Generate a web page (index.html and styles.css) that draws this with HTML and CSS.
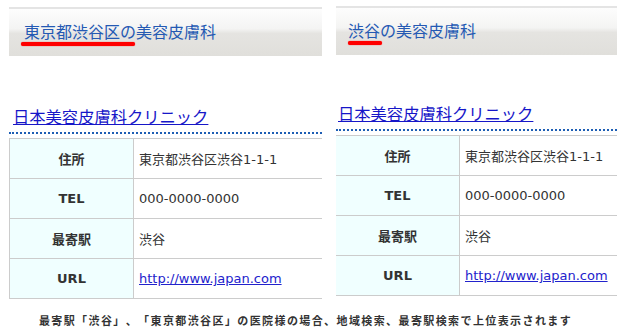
FILE: index.html
```html
<!DOCTYPE html>
<html lang="ja">
<head>
  <meta charset="UTF-8" />
  <title>美容皮膚科クリニック</title>
  <link rel="stylesheet" href="styles.css">
</head>
<body>
  <div class="page">
    <div class="cols">

      <!-- 区での表示例 -->
      <div class="col">
        <div class="area-head">
          <h3><span class="mark mark-long">東京都渋谷区</span>の美容皮膚科</h3>
        </div>
        <h2 class="clinic"><a href="#">日本美容皮膚科クリニック</a></h2>
        <table class="spec">
          <tr><th>住所</th><td>東京都渋谷区渋谷1-1-1</td></tr>
          <tr><th>TEL</th><td>000-0000-0000</td></tr>
          <tr><th>最寄駅</th><td>渋谷</td></tr>
          <tr><th>URL</th><td><a href="#">http://www.japan.com</a></td></tr>
        </table>
      </div>

      <!-- 駅での表示例 -->
      <div class="col col-alt">
        <div class="area-head">
          <h3><span class="mark">渋谷</span>の美容皮膚科</h3>
        </div>
        <h2 class="clinic"><a href="#">日本美容皮膚科クリニック</a></h2>
        <table class="spec spec-open">
          <tr><th>住所</th><td>東京都渋谷区渋谷1-1-1</td></tr>
          <tr><th>TEL</th><td>000-0000-0000</td></tr>
          <tr><th>最寄駅</th><td>渋谷</td></tr>
          <tr><th>URL</th><td><a href="#">http://www.japan.com</a></td></tr>
        </table>
      </div>

    </div>

    <p class="note">最寄駅「渋谷」、「東京都渋谷区」の医院様の場合、地域検索、最寄駅検索で上位表示されます</p>
  </div>
</body>
</html>
```

FILE: styles.css
```css
body, html {
  margin: 0;
  padding: 0;
  background: #fff;
  font-family: "DejaVu Sans", "Noto Sans CJK JP", sans-serif;
  color: #333;
  text-spacing-trim: space-all;
}

.page {
  width: 617px;
  overflow: hidden;
  padding-top: 7px;
}

.cols {
  display: flex;
  gap: 14px;
  padding-left: 9px;
}

.col {
  flex: 0 0 313px;
}

.col-alt {
  margin-top: -1px;
}

/* 見出しバー */
.area-head {
  border-top: 2px solid #e4e4e4;
  height: 47px;
  background: linear-gradient(#fdfdfd 0%, #f4f4f3 42%, #e5e4e1 52%, #e0dfdb 100%);
}

.area-head h3 {
  margin: 0;
  padding: 0 0 2px 15px;
  line-height: 45px;
  font-size: 16px;
  font-weight: normal;
  color: #2459b3;
  font-family: "Noto Sans CJK JP", sans-serif;
}

.col-alt .area-head h3 {
  padding-left: 12px;
}

.mark {
  position: relative;
  display: inline-block;
  line-height: 16px;
}

.mark::after {
  content: "";
  position: absolute;
  left: 0;
  right: -2px;
  top: 19px;
  height: 4px;
  border-radius: 2px;
  background: #ff0000;
  box-shadow: 0 0 1px #ff0000;
}

.mark-long::after {
  left: -3px;
  right: -15px;
}

/* クリニック名 */
.clinic {
  margin: 48px 0 0;
  padding: 0 0 4px 4px;
  line-height: 24px;
  font-size: 16.3px;
  font-weight: normal;
  font-family: "Noto Sans CJK JP", sans-serif;
  border-bottom: 2px dotted #1d5eb4;
}

.col-alt .clinic {
  margin-top: 46px;
  padding-left: 2px;
}

.clinic a {
  color: #1616c8;
}

/* 情報テーブル */
.spec {
  width: 100%;
  margin-top: 4px;
  border-collapse: collapse;
  font-size: 13px;
}

.spec th,
.spec td {
  height: 39px;
  border: 1px solid #cccccc;
  border-right: none;
  padding: 0;
}

.spec th {
  width: 123px;
  background: #f0ffff;
  font-weight: bold;
  color: #333;
  text-align: center;
}

.spec td {
  padding-left: 5px;
  color: #333;
}

.spec td a {
  color: #2222cc;
}

.spec-open th {
  border-left: none;
}

.note {
  margin: 13px 0 0;
  padding-right: 6px;
  text-align: center;
  font-size: 11px;
  line-height: 16px;
  letter-spacing: 1.4px;
  font-weight: bold;
  color: #333;
  font-family: "Noto Sans CJK JP", sans-serif;
}
```
